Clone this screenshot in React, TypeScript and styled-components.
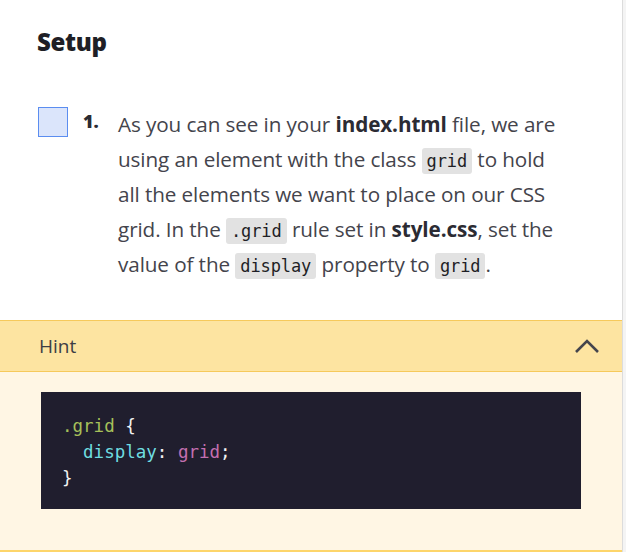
import React from "react";
import styled, { createGlobalStyle } from "styled-components";

const GlobalStyle = createGlobalStyle`
  html, body {
    margin: 0;
    padding: 0;
    background: #ffffff;
  }
  body {
    font-family: "Open Sans", Lato, sans-serif;
    color: #3d3d45;
  }
`;

const Frame = styled.div`
  display: flex;
  width: 626px;
  height: 552px;
  overflow: hidden;
`;

const Panel = styled.div`
  width: 622px;
  display: flex;
  flex-direction: column;
`;

const Track = styled.div`
  width: 3px;
  border-left: 1px solid #dcdcdc;
  background: #f4f4f4;
`;

const Title = styled.h2`
  margin: 0;
  padding: 27px 0 0 37px;
  font-size: 24px;
  font-weight: 800;
  color: #1f1f26;
  line-height: 30px;
  letter-spacing: -0.3px;
`;

const Task = styled.div`
  display: flex;
  align-items: flex-start;
  padding: 50px 0 0 38px;
`;

const Check = styled.div`
  width: 28px;
  height: 28px;
  flex: none;
  border: 1px solid #5b8df0;
  background: #dbe5fb;
`;

const Num = styled.span`
  width: 35px;
  flex: none;
  margin-left: 15px;
  margin-top: -3px;
  font-weight: 800;
  font-size: 18px;
  line-height: 35px;
  color: #2b2b33;
`;

const Body = styled.p`
  width: 450px;
  margin: 0;
  font-size: 20.7px;
  line-height: 35px;
  color: #44444c;
  letter-spacing: -0.1px;
`;

const Bold = styled.b`
  font-weight: 700;
  color: #2b2b33;
`;

const Code = styled.code`
  font-family: "DejaVu Sans Mono", "Liberation Mono", monospace;
  font-size: 17px;
  line-height: 1;
  background: #e2e2e2;
  color: #1f1f26;
  border-radius: 3px;
  padding: 3px 5px;
`;

const Hint = styled.div`
  margin-top: 38px;
  border-top: 1px solid #f6c95b;
  border-bottom: 1px solid #f6c95b;
  background: #fde4a1;
  height: 50px;
  display: flex;
  align-items: center;
  justify-content: space-between;
  padding: 0 22px 0 39px;
  font-size: 19px;
  color: #3d3d45;
`;

const HintBody = styled.div`
  flex: 1;
  background: #fff6e4;
  padding: 20px 41px 0 41px;
  border-bottom: 2px solid #fdd56a;
`;

const CodeBlock = styled.pre`
  margin: 0;
  background: #201e2e;
  padding: 21px 21px 18px 21px;
  font-family: "DejaVu Sans Mono", "Liberation Mono", monospace;
  font-size: 17.5px;
  line-height: 26px;
  color: #f2f2f2;
`;

const Tok = styled.span<{ $c: string }>`
  color: ${(p) => p.$c};
`;

export default function App() {
  return (
    <Frame>
      <GlobalStyle />
      <Panel>
        <Title>Setup</Title>
        <Task>
          <Check />
          <Num>1.</Num>
          <Body>
            As you can see in your <Bold>index.html</Bold> file, we are using an
            element with the class <Code>grid</Code> to hold all the elements we
            want to place on our CSS grid. In the <Code>.grid</Code> rule set in{" "}
            <Bold>style.css</Bold>, set the value of the <Code>display</Code>{" "}
            property to <Code>grid</Code>.
          </Body>
        </Task>
        <Hint>
          <span>Hint</span>
          <svg width="26" height="16" viewBox="0 0 26 16">
            <path d="M2 14 L13 3 L24 14" fill="none" stroke="#45454d" strokeWidth="2.6" />
          </svg>
        </Hint>
        <HintBody>
          <CodeBlock>
            <Tok $c="#a6c05a">.grid</Tok> {"{"}
            {"\n  "}
            <Tok $c="#6fdde0">display</Tok>: <Tok $c="#c36fb0">grid</Tok>;
            {"\n}"}
          </CodeBlock>
        </HintBody>
      </Panel>
      <Track />
    </Frame>
  );
}
